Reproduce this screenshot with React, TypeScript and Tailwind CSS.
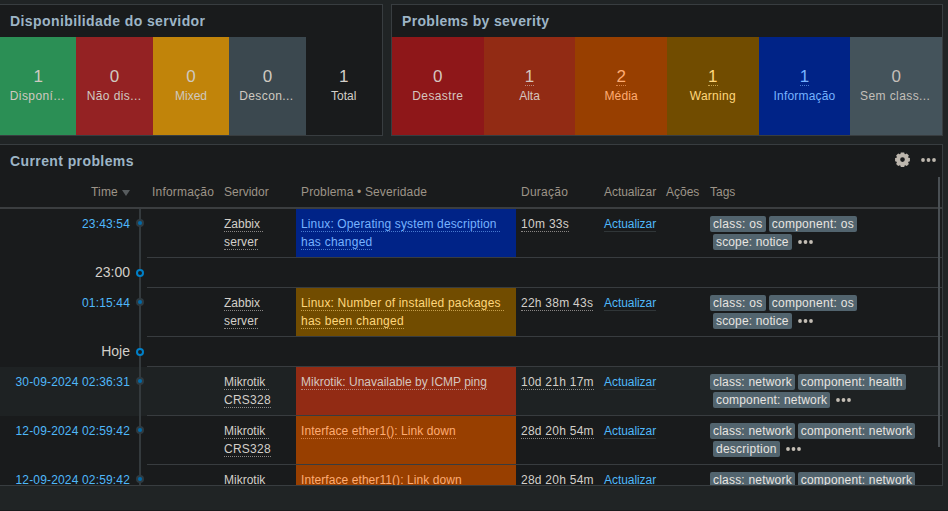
import React from "react";

type Tile = { count: string; label: string; tile: string; linked?: boolean };

const availability: Tile[] = [
  { count: "1", label: "Disponí...", tile: "bg-[#2b8f55] text-[#cfc9c0]" },
  { count: "0", label: "Não dis...", tile: "bg-[#942223] text-[#cfc9c0]" },
  { count: "0", label: "Mixed", tile: "bg-[#c1840a] text-[#cfc9c0]" },
  { count: "0", label: "Descon...", tile: "bg-[#3b484f] text-[#cfc9c0]" },
  { count: "1", label: "Total", tile: "text-[#d3cfc9]" },
];

const severities: Tile[] = [
  { count: "0", label: "Desastre", tile: "bg-[#8e1719] text-[#d5c5bf]" },
  { count: "1", label: "Alta", tile: "bg-[#922b14] text-[#d5c5bf]", linked: true },
  { count: "2", label: "Média", tile: "bg-[#983f00] text-[#ffac72]", linked: true },
  { count: "1", label: "Warning", tile: "bg-[#714c00] text-[#ffd77c]", linked: true },
  { count: "1", label: "Informação", tile: "bg-[#002387] text-[#76b2ff]", linked: true },
  { count: "0", label: "Sem class...", tile: "bg-[#44535b] text-[#c3bfb9]" },
];

type Problem = {
  time: string;
  host: string[];
  problem: string[];
  color: string;
  duration: string;
  tags: string[][];
  shaded?: boolean;
};

const INFO = "bg-[#002387] text-[#76b2ff]";
const WARN = "bg-[#714c00] text-[#ffd77c]";
const HIGH = "bg-[#922b14] text-[#d5c5bf]";
const AVERAGE = "bg-[#983f00] text-[#ffac72]";

const rows: (Problem | string)[] = [
  {
    time: "23:43:54",
    host: ["Zabbix ", "server"],
    problem: ["Linux: Operating system description ", "has changed"],
    color: INFO,
    duration: "10m 33s",
    tags: [["class: os", "component: os"], ["scope: notice"]],
  },
  "23:00",
  {
    time: "01:15:44",
    host: ["Zabbix ", "server"],
    problem: ["Linux: Number of installed packages ", "has been changed"],
    color: WARN,
    duration: "22h 38m 43s",
    tags: [["class: os", "component: os"], ["scope: notice"]],
  },
  "Hoje",
  {
    time: "30-09-2024 02:36:31",
    host: ["Mikrotik ", "CRS328"],
    problem: ["Mikrotik: Unavailable by ICMP ping"],
    color: HIGH,
    duration: "10d 21h 17m",
    tags: [["class: network", "component: health"], ["component: network"]],
    shaded: true,
  },
  {
    time: "12-09-2024 02:59:42",
    host: ["Mikrotik ", "CRS328"],
    problem: ["Interface ether1(): Link down"],
    color: AVERAGE,
    duration: "28d 20h 54m",
    tags: [["class: network", "component: network"], ["description"]],
  },
  {
    time: "12-09-2024 02:59:42",
    host: ["Mikrotik "],
    problem: ["Interface ether11(): Link down"],
    color: AVERAGE,
    duration: "28d 20h 54m",
    tags: [["class: network", "component: network"]],
  },
];

// Letter spacing of the strings that run wider or narrower than the font's own advance.
const tracking: Record<string, string> = {
  "Disponibilidade do servidor": "tracking-[0.41px]",
  "Problems by severity": "tracking-[0.33px]",
  "Current problems": "tracking-[0.4px]",
  "Disponí...": "tracking-[0.42px] -ml-[2px]",
  "Não dis...": "tracking-[0.4px] -ml-[1px]",
  "Descon...": "tracking-[0.4px] -ml-[2px]",
  Desastre: "tracking-[0.38px]",
  "Média": "tracking-[0.15px]",
  Warning: "tracking-[0.25px]",
  "Informação": "tracking-[0.2px]",
  "Sem class...": "tracking-[0.42px] -ml-[2px]",
  "Problema • Severidade": "tracking-[0.15px]",
  "Duração": "tracking-[0.25px]",
  Actualizar: "tracking-[-0.06px]",
  Time: "tracking-[0.2px]",
  "Linux: Operating system description ": "tracking-[0.14px]",
  "has changed": "tracking-[0.25px]",
  "Linux: Number of installed packages ": "tracking-[0.18px]",
  "has been changed": "tracking-[0.26px]",
  "Interface ether1(): Link down": "tracking-[0.07px]",
  "Interface ether11(): Link down": "tracking-[0.07px]",
  "10m 33s": "tracking-[0.3px]",
  "22h 38m 43s": "tracking-[0.25px]",
  "10d 21h 17m": "tracking-[0.25px]",
  "28d 20h 54m": "tracking-[0.25px]",
  server: "tracking-[0.15px]",
  CRS328: "tracking-[0.25px]",
  "class: os": "tracking-[0.33px]",
  "component: os": "tracking-[0.28px]",
  "scope: notice": "tracking-[0.15px]",
  "class: network": "tracking-[0.2px]",
  "component: health": "tracking-[0.18px]",
  "component: network": "tracking-[0.18px]",
  description: "tracking-[0.25px]",
};

function Text({ children }: { children: string }) {
  return <span className={tracking[children] ?? ""}>{children}</span>;
}

const GRID =
  "grid grid-cols-[139px_8px_72px_77px_220px_83px_62px_44px_1fr]";

function TileCell({ count, label, tile, linked }: Tile) {
  return (
    <div className={`flex flex-col items-center pt-[30px] ${tile}`}>
      <div className="flex h-5 flex-col items-center text-[17px] leading-[19px]">
        <span className={linked ? "h-[19px] border-b border-dotted border-current/60 leading-[19px]" : ""}>
          {count}
        </span>
      </div>
      <div className="text-[12px] leading-[18px] whitespace-nowrap">
        <Text>{label}</Text>
      </div>
    </div>
  );
}

function Title({ children }: { children: string }) {
  return (
    <h2 className="text-[14px] leading-8 font-bold whitespace-nowrap text-[#9db5c6]">
      <Text>{children}</Text>
    </h2>
  );
}

function Dotted({ lines }: { lines: string[] }) {
  return (
    <>
      {lines.map((line) => (
        <div key={line} className="flex h-[18px]">
          <span className="h-[17px] border-b border-dotted border-current/60 whitespace-pre">
            <Text>{line}</Text>
          </span>
        </div>
      ))}
    </>
  );
}

function Dots({ className }: { className: string }) {
  return (
    <svg className={className} width="15" height="4" viewBox="0 0 15 4" fill="currentColor">
      <circle cx="2" cy="2" r="1.9" />
      <circle cx="7.5" cy="2" r="1.9" />
      <circle cx="13" cy="2" r="1.9" />
    </svg>
  );
}

function Gear() {
  return (
    <svg width="15" height="15" viewBox="0 0 16 16" fill="#bdb7ae">
      <path
        fillRule="evenodd"
        d="M6.2 0.4h3.6l.5 1.6.6.3 1.700-.8 2.200 2.200-.8 1.600.3.7 1.600.5v3.400l-1.600.5-.3.700.8 1.600-2.200 2.200-1.700-.8-.6.3-.5 1.600H6.200l-.5-1.600-.6-.3-1.700.8-2.200-2.200.8-1.600-.3-.7L.1 9.900V6.500L1.700 6l.3-.7-.8-1.600 2.200-2.200 1.700.8.600-.3zM8 5.600a2.500 2.500 0 1 0 0 5A2.500 2.500 0 0 0 8 5.600z"
      />
    </svg>
  );
}

function ProblemRow({ row }: { row: Problem }) {
  const line = "border-b border-[#383c3f]";
  return (
    <div className={`${GRID} h-[49px] shrink-0 ${row.shaded ? "bg-[#1e2223]" : ""}`}>
      <div className="pt-1.5 pr-[9px] text-right tracking-[0.16px] whitespace-nowrap text-[#4fb8fa]">
        {row.time}
      </div>
      <div className="border-l-2 border-[#343a3d]">
        <div className="mt-[10px] -ml-[5px] flex size-2 items-center justify-center rounded-full bg-[#2f3b41]">
          <div className="size-1 rounded-full bg-[#0069a8]" />
        </div>
      </div>
      <div className={line} />
      <div className={`${line} pt-1.5 pl-[5px] text-[#d3cfc9]`}>
        <Dotted lines={row.host} />
      </div>
      <div className={`${line} pt-1.5 pl-[5px] ${row.color}`}>
        <Dotted lines={row.problem} />
      </div>
      <div className={`${line} pt-1.5 pl-[5px] text-[#d3cfc9]`}>
        <Dotted lines={[row.duration]} />
      </div>
      <div className={`${line} flex items-start pt-1.5 pl-[5px] text-[#4fb8fa]`}>
        <span className="h-[17px] border-b border-[#303638]">
          <Text>Actualizar</Text>
        </span>
      </div>
      <div className={line} />
      <div className={`${line} pt-[7px] pl-[5px] text-[#e8e5e1]`}>
        {row.tags.map((group, i) => (
          <div key={i} className={`flex h-[18px] gap-[3px] ${i === 1 ? "pl-[3px]" : ""}`}>
            {group.map((tag) => (
              <span key={tag} className="h-4 rounded-xs bg-[#52646e] px-[3px] leading-4 whitespace-nowrap">
                <Text>{tag}</Text>
              </span>
            ))}
            {i === 1 && <Dots className="mt-[6px] ml-[3px] text-[#c4beb5]" />}
          </div>
        ))}
      </div>
    </div>
  );
}

function BreakRow({ label }: { label: string }) {
  return (
    <div className="grid h-[30px] shrink-0 grid-cols-[139px_8px_1fr]">
      <div className="pt-[5px] pr-[9px] text-right text-[14px] text-[#d3cfc9]">{label}</div>
      <div className="border-l-2 border-[#343a3d]">
        <div className="mt-[11px] -ml-[5px] size-2 rounded-full border-2 border-[#0080c8] bg-[#191b1c]" />
      </div>
      <div className="border-b border-[#383c3f]" />
    </div>
  );
}

const columns = ["Informação", "Servidor", "Problema • Severidade", "Duração", "Actualizar", "Ações", "Tags"];

export default function App() {
  return (
    <div className="h-[511px] w-[948px] overflow-hidden border-b border-[#191b1c] bg-[#202425] pt-1 font-['Liberation_Sans',Arial,sans-serif] text-[12px] leading-[18px]">
      <div className="flex gap-2">
        <section className="h-[132px] w-[383px] border-y border-r border-[#383d40] bg-[#191b1c]">
          <div className="h-8 pl-[10px]">
            <Title>Disponibilidade do servidor</Title>
          </div>
          <div className="grid h-[98px] grid-cols-5">
            {availability.map((t) => (
              <TileCell key={t.label} {...t} />
            ))}
          </div>
        </section>
        <section className="h-[132px] w-[552px] border border-[#383d40] bg-[#191b1c]">
          <div className="h-8 pl-[10px]">
            <Title>Problems by severity</Title>
          </div>
          <div className="grid h-[98px] grid-cols-6">
            {severities.map((t) => (
              <TileCell key={t.label} {...t} />
            ))}
          </div>
        </section>
      </div>

      <section className="relative mt-2 flex h-[342px] w-[943px] flex-col overflow-hidden border-y border-r border-[#383d40] bg-[#191b1c]">
        <div className="flex h-8 shrink-0 items-center pr-[6.5px] pl-[10px]">
          <Title>Current problems</Title>
          <div className="mb-[3px] ml-auto flex items-center gap-[11px] text-[#bdb7ae]">
            <Gear />
            <Dots className="" />
          </div>
        </div>
        <div className={`${GRID} h-8 shrink-0 border-b-2 border-[#3b3e40] pt-[6px] whitespace-nowrap text-[#9d9488]`}>
          <div className="flex items-center justify-end gap-1 self-start pr-[9px]">
            <Text>Time</Text>
            <span className="mt-[2px] border-x-4 border-t-[6px] border-x-transparent border-t-[#575c5e]" />
          </div>
          <div />
          {columns.map((name) => (
            <div key={name} className="pl-[5px]">
              <Text>{name}</Text>
            </div>
          ))}
        </div>
        {rows.map((row, i) =>
          typeof row === "string" ? <BreakRow key={i} label={row} /> : <ProblemRow key={i} row={row} />,
        )}
        <div className="absolute top-8 right-[2px] h-[270px] w-[2px] bg-[#4a5054]" />
      </section>
    </div>
  );
}
